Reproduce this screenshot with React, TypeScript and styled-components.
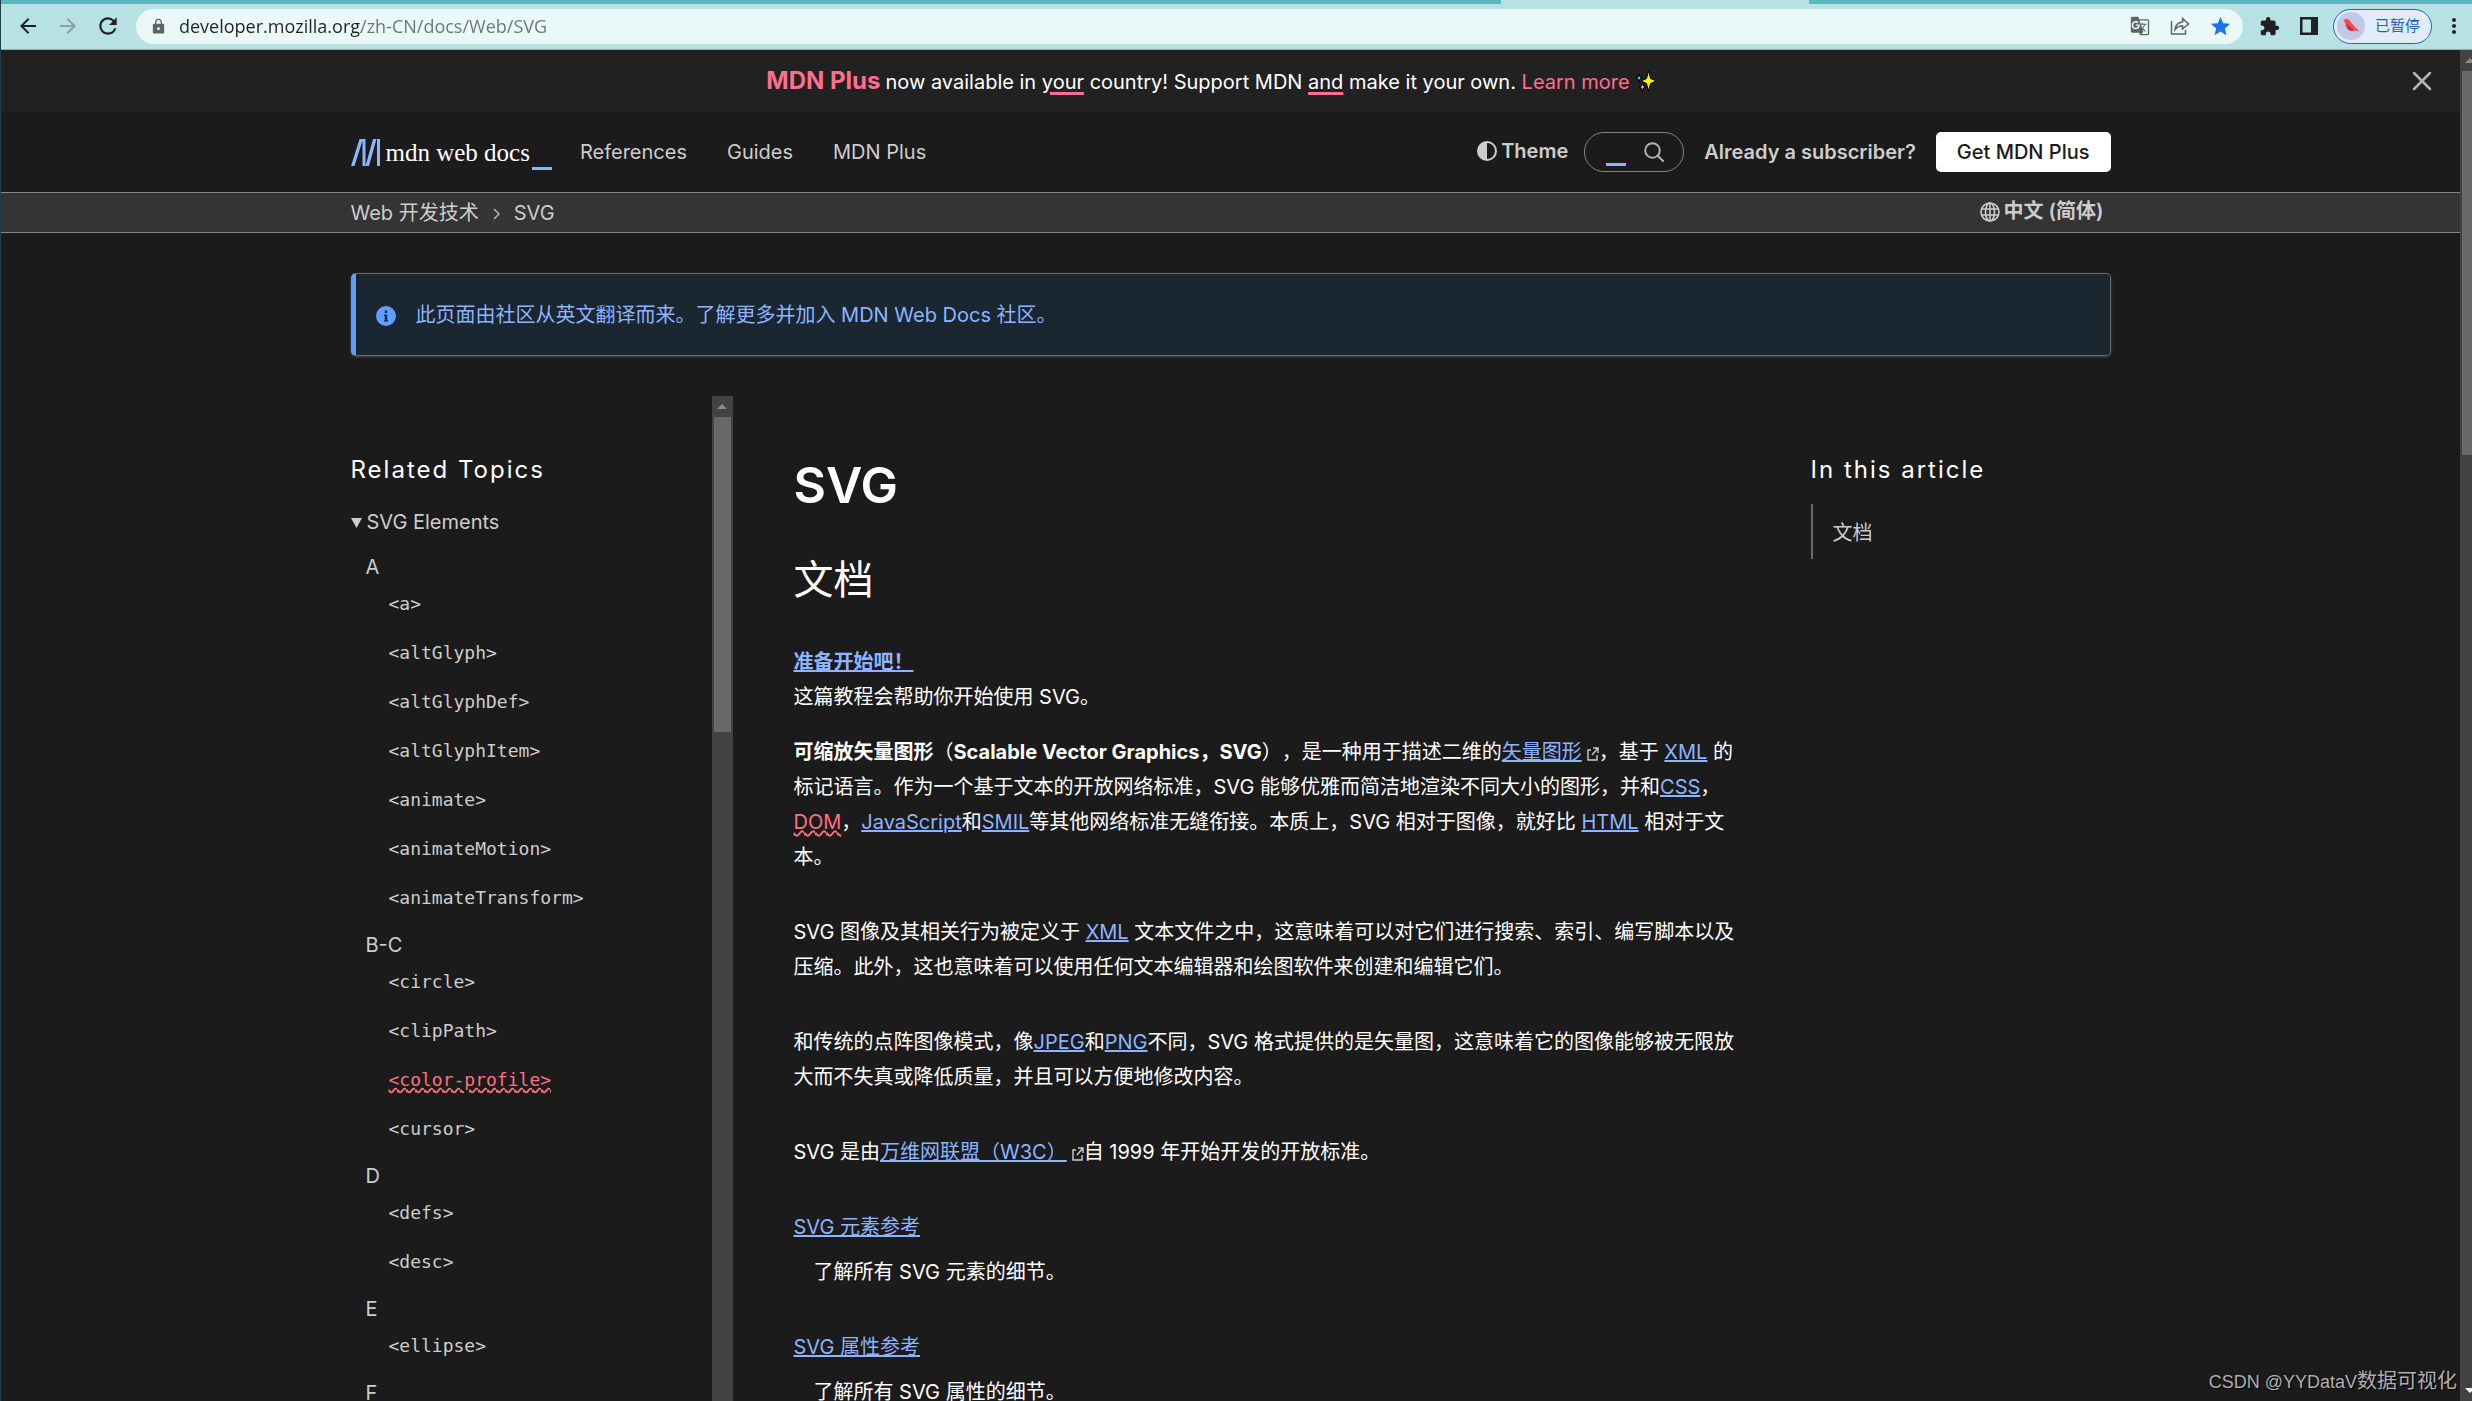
import React from "react";
import styled, { createGlobalStyle, css } from "styled-components";
import { MdArrowBack, MdArrowForward, MdRefresh, MdLock, MdStar, MdExtension, MdGTranslate, MdMoreVert } from "react-icons/md";

const sans = `Inter, "Noto Sans CJK SC", sans-serif`;
const mono = `"DejaVu Sans Mono", monospace`;

const c = {
  page: "#1b1b1b",
  raised: "#212121",
  bar: "#343434",
  line: "#858585",
  text: "#ffffff",
  soft: "#cdcdcd",
  link: "#8cb4ff",
  pink: "#ff6d91",
  red: "#ff707f",
  track: "#424242",
  thumb: "#686868",
};

const GlobalStyle = createGlobalStyle`
  *, *::before, *::after { box-sizing: border-box; }
  body { margin: 0; background: ${c.page}; }
  h1, h2, p, ul, dl, dd { margin: 0; padding: 0; }
  ul { list-style: none; }
  button, input { font: inherit; color: inherit; background: none; border: 0; padding: 0; margin: 0; outline: 0; }
  a { color: inherit; text-decoration: none; }
  svg { display: block; flex: none; }
`;

const Window = styled.div`
  display: flex;
  flex-direction: column;
  height: 100vh;
  overflow: hidden;
  position: relative;
  border-left: 1px solid #1f3f4a;
  font-family: ${sans};
  font-size: 20px;
  line-height: 35px;
  color: ${c.text};
  background: ${c.page};
  text-spacing-trim: space-all;
`;

/* Browser chrome */
const TabStrip = styled.div`
  flex: none;
  display: flex;
  justify-content: center;
  height: 4px;
  background: #5ab8c1;
`;
const ActiveTab = styled.div`
  width: 308px;
  margin-left: 836px;
  background: #b8e1e4;
`;
const Toolbar = styled.div`
  flex: none;
  display: flex;
  align-items: center;
  height: 46px;
  padding: 5px 6px 6px 15px;
  background: #b8e1e4;
  border-bottom: 1px solid #93adaf;
`;
const ChromeButton = styled.button<{ $dim?: boolean }>`
  display: grid;
  place-items: center;
  width: 40px;
  height: 34px;
  margin-left: -8px;
  margin-right: 8px;
  color: ${(p) => (p.$dim ? "#84a1a4" : "#202124")};
`;
const Omnibox = styled.div`
  flex: 1;
  display: flex;
  align-items: center;
  height: 35px;
  padding: 0 11px 0 14px;
  gap: 12px;
  border-radius: 18px;
  background: #ebf8f8;
  color: #5f6368;
`;
const Address = styled.input`
  flex: 1;
  height: 30px;
  font-family: "Open Sans", sans-serif;
  font-size: 18px;
  color: #202124;
  background: linear-gradient(90deg, #202124 182px, #6b7377 182px);
  background-clip: text;
  -webkit-background-clip: text;
  -webkit-text-fill-color: transparent;
`;
const BoxActions = styled.div`
  display: flex;
  gap: 16px;
`;
const SmallButton = styled.button<{ $blue?: boolean }>`
  display: grid;
  place-items: center;
  width: 24px;
  height: 24px;
  color: ${(p) => (p.$blue ? "#1a73e8" : "inherit")};
`;
const ChromeActions = styled.div`
  display: flex;
  align-items: center;
  gap: 16px;
  padding-left: 14px;
  color: #202124;
`;
const Profile = styled.button`
  display: flex;
  align-items: center;
  gap: 10px;
  width: 99px;
  height: 35px;
  margin: 0 -6px 0 -4px;
  padding-left: 3px;
  border: 1px solid #2064cf;
  border-radius: 18px;
  background: #e0ecf6;
  color: #1d5fc7;
  font-size: 15px;
  line-height: 30px;
`;

/* Page frame */
const Viewport = styled.div`
  flex: 1;
  min-height: 0;
  display: flex;
`;
const Page = styled.div`
  flex: 1;
  min-width: 0;
  overflow: hidden;
`;
const Container = styled.div`
  width: 1760px;
  max-width: 100%;
  margin: 0 auto;
`;
const PageTrack = styled.div`
  flex: none;
  display: flex;
  flex-direction: column;
  width: 12px;
  overflow: hidden;
  background: ${c.track};
  padding: 0 0 0 2px;
`;
const SideTrack = styled(PageTrack)`
  width: 21px;
  margin-right: 1px;
  padding: 0 2px;
`;
const Arrow = styled.div<{ $down?: boolean; $clip?: boolean }>`
  flex: none;
  display: flex;
  align-items: center;
  justify-content: ${(p) => (p.$clip ? "flex-start" : "center")};
  padding-left: ${(p) => (p.$clip ? "3px" : "0")};
  height: 21px;
  margin-top: ${(p) => (p.$down ? "auto" : "0")};
  &::before {
    content: "";
    border: 5px solid transparent;
    ${(p) =>
      p.$down
        ? css`border-top-color: #ffffff; border-bottom-width: 0;`
        : css`border-bottom-color: #8b8b8b; border-top-width: 0;`}
  }
`;
const Thumb = styled.div<{ $share: number }>`
  flex: 0 0 ${(p) => p.$share}px;
  background: ${c.thumb};
`;

const Banner = styled.div`
  display: flex;
  align-items: center;
  height: 62px;
  padding: 0 26px 0 12px;
  background: ${c.raised};
`;
const BannerText = styled.p`
  flex: 1;
  display: flex;
  justify-content: center;
  align-items: baseline;
  gap: 5px;
  u {
    text-decoration: underline ${c.pink} 3px;
    text-underline-offset: 3px;
  }
  strong { font-size: 24px; font-weight: 700; color: ${c.pink}; }
  a { color: ${c.pink}; }
  svg { align-self: center; }
`;
const CloseButton = styled.button`
  display: grid;
  place-items: center;
  width: 24px;
  height: 24px;
  color: #b3b3b3;
`;

const Header = styled(Container).attrs({ as: "header" })`
  display: flex;
  align-items: center;
  height: 80px;
`;
const Logo = styled.a`
  display: flex;
  align-items: center;
  font-family: "Liberation Serif", serif;
  font-size: 25px;
  gap: 6px;
  margin-right: 28px;
`;
const Cursor = styled.span`
  align-self: flex-end;
  width: 20px;
  height: 3px;
  margin-left: -4px;
  background: ${c.link};
`;
const Nav = styled.nav`
  display: flex;
  gap: 40px;
  margin-right: auto;
  color: ${c.soft};
`;
const Tools = styled.div`
  display: flex;
  align-items: center;
  gap: 20px;
  font-weight: 600;
  color: ${c.soft};
`;
const IconTextButton = styled.button`
  display: flex;
  align-items: center;
  gap: 4px;
  padding-bottom: 2px;
  font-weight: 600;
  color: ${c.soft};
`;
const SearchForm = styled.form`
  display: flex;
  align-items: center;
  gap: 18px;
  width: 100px;
  height: 40px;
  margin-left: -4px;
  padding: 0 18px 0 21px;
  border: 1px solid #858585;
  border-radius: 20px;
`;
const SearchInput = styled.input`
  width: 20px;
  height: 28px;
  border-bottom: 3px solid ${c.link};
`;
const PlusButton = styled.button`
  height: 40px;
  padding: 0 21px;
  border-radius: 5px;
  background: #ffffff;
  color: #1b1b1b;
  font-weight: 500;
`;

const CrumbBar = styled.div`
  background: ${c.bar};
  border: solid ${c.line};
  border-width: 1px 0;
`;
const CrumbRow = styled(Container)`
  display: flex;
  justify-content: space-between;
  height: 39px;
  padding-right: 7px;
`;
const Crumbs = styled.nav`
  display: flex;
  align-items: center;
  gap: 12px;
  padding-top: 2px;
  color: ${c.soft};
`;

const Notice = styled.a`
  display: flex;
  align-items: center;
  gap: 20px;
  margin: 40px 0;
  padding: 24px 20px 22px;
  border: 1px solid #696969;
  border-left: 5px solid #5e9eff;
  border-radius: 5px;
  background: #1a2630;
  box-shadow: 0 1px 3px rgba(255, 255, 255, 0.2);
  color: ${c.link};
`;

const Columns = styled.div`
  display: grid;
  grid-template-columns: 383px minmax(0, 1fr) 300px;
  column-gap: 60px;
`;
const Sidebar = styled.aside`
  display: flex;
  height: calc(100vh - 396px);
  overflow: hidden;
`;
const SidebarBody = styled.div`
  flex: 1;
  padding-top: 56px;
  color: ${c.soft};
`;
const SideHeading = styled.h2`
  margin-bottom: 17px;
  font-size: 24px;
  font-weight: 400;
  letter-spacing: 2px;
  color: ${c.text};
`;
const Details = styled.details`
  padding-top: 1px;
  summary {
    display: flex;
    align-items: center;
    gap: 5px;
    margin-bottom: 10px;
    list-style: none;
  }
`;
const Group = styled.li`
  padding-left: 15px;
`;
const Item = styled.li<{ $deprecated?: boolean }>`
  padding: 0 0 12px 23px;
  line-height: 37px;
  font-family: ${mono};
  font-size: 18px;
  a {
    color: ${(p) => (p.$deprecated ? c.red : "inherit")};
    text-decoration: ${(p) => (p.$deprecated ? "underline wavy" : "none")};
  }
`;

const Article = styled.main`
  padding-top: 59px;
  h1 { margin-bottom: 35px; font-size: 50px; line-height: 60px; font-weight: 600; }
  h2 { margin-bottom: 35px; font-size: 40px; line-height: 60px; font-weight: 400; }
  p { margin-bottom: 40px; }
  dt { margin-bottom: 10px; }
  dd { margin-bottom: 40px; padding-left: 20px; }
`;
const Lead = styled.div`
  margin-bottom: 20px;
`;
const Link = styled.a<{ $missing?: boolean; $bold?: boolean }>`
  color: ${(p) => (p.$missing ? c.red : c.link)};
  font-weight: ${(p) => (p.$bold ? 700 : 400)};
  text-decoration: underline ${(p) => (p.$missing ? "wavy" : "solid")};
`;
const Outward = styled.svg`
  display: inline-block;
  margin-left: 5px;
  vertical-align: -2px;
`;

const Toc = styled.aside`
  padding-top: 56px;
`;
const TocItem = styled.li`
  padding: 12px 20px 8px;
  border-left: 2px solid #696969;
  color: ${c.soft};
`;

const Watermark = styled.div`
  position: absolute;
  right: 15px;
  bottom: 1px;
  font-family: "Liberation Sans", "Noto Sans CJK SC", sans-serif;
  font-size: 18px;
  color: #b0b0b0;
  text-shadow: 1px 1px 1px #000000;
  span { font-size: 20px; }
`;

const groups: { title: string; items: string[] }[] = [
  { title: "A", items: ["a", "altGlyph", "altGlyphDef", "altGlyphItem", "animate", "animateMotion", "animateTransform"] },
  { title: "B-C", items: ["circle", "clipPath", "color-profile", "cursor"] },
  { title: "D", items: ["defs", "desc"] },
  { title: "E", items: ["ellipse"] },
  { title: "F", items: [] },
];

const ExternalIcon = () => (
  <Outward width="12" height="14" viewBox="0 0 12 14" fill="none" stroke="#cdcdcd" strokeWidth="1.4">
    <path d="M4 3H1v10h9V8M6 1h5v5M11 1L5 8" />
  </Outward>
);

const Sparkles = () => (
  <svg width="22" height="22" viewBox="0 0 22 22" stroke="#000" strokeWidth="1">
    <path d="M13.500 1L15.500 8.500L21.500 11L15.500 13.500L13.500 21L11.500 13.500L6 11L11.500 8.500Z" fill="#fff100" />
    <path d="M4 3.500L5 7L8 8L5 9L4 12.500L3 9L.5 8L3 7Z" fill="#50c8f4" />
    <path d="M7.500 13L8.500 16L10.500 17L8.500 18L7.500 21L6.500 18L4 17L6.500 16Z" fill="#f4a6d8" />
  </svg>
);

export default function App() {
  return (
    <Window lang="zh-CN">
      <GlobalStyle />
      <TabStrip><ActiveTab /></TabStrip>
      <Toolbar>
        <ChromeButton aria-label="Back"><MdArrowBack size={24} /></ChromeButton>
        <ChromeButton aria-label="Forward" $dim><MdArrowForward size={24} /></ChromeButton>
        <ChromeButton aria-label="Reload"><MdRefresh size={26} /></ChromeButton>
        <Omnibox>
          <MdLock size={17} />
          <Address aria-label="Address" defaultValue="developer.mozilla.org/zh-CN/docs/Web/SVG" />
          <BoxActions>
            <SmallButton aria-label="Translate"><MdGTranslate size={20} /></SmallButton>
            <SmallButton aria-label="Share">
              <svg width="20" height="20" viewBox="0 0 20 20" fill="none" stroke="currentColor" strokeWidth="1.500">
                <path d="M1.500 5v13h14v-4" />
                <path d="M5 13.500C5.500 9 8 6.500 12.500 6V2.500L18.500 8L12.500 13V9.800C9 9.800 7 11 5 13.500Z" />
              </svg>
            </SmallButton>
            <SmallButton aria-label="Bookmark" $blue><MdStar size={23} /></SmallButton>
          </BoxActions>
        </Omnibox>
        <ChromeActions>
          <SmallButton aria-label="Extensions"><MdExtension size={21} /></SmallButton>
          <SmallButton aria-label="Side panel">
            <svg width="18" height="18" viewBox="0 0 18 18"><path fillRule="evenodd" fill="currentColor" d="M0 0h18v18H0zM2.500 2.500v13h8.500v-13z" /></svg>
          </SmallButton>
          <Profile>
            <svg width="28" height="28" viewBox="0 0 28 28">
              <circle cx="14" cy="14" r="14" fill="#c3c8e8" />
              <path d="M6.500 8.500C8 6.500 11 6.500 12.500 8.500L17 14L22.500 19.500L17.500 18.500C13 20.500 8.500 17 8.500 11.500Z" fill="#f5484b" />
              <path d="M10 12l7 6-3 1c-3-1-4-4-4-7Z" fill="#c92d45" />
            </svg>
            已暂停
          </Profile>
          <SmallButton aria-label="Menu"><MdMoreVert size={24} /></SmallButton>
        </ChromeActions>
      </Toolbar>

      <Viewport>
        <Page>
          <Banner>
            <BannerText>
              <strong>MDN Plus</strong>
              <span>now available in <u>your</u> country! Support MDN <u>and</u> make it your own. <a href="#plus">Learn more</a></span>
              <Sparkles />
            </BannerText>
            <CloseButton aria-label="Close">
              <svg width="20" height="20" viewBox="0 0 20 20" stroke="currentColor" strokeWidth="2.500" strokeLinecap="round"><path d="M2 2l16 16M18 2L2 18" /></svg>
            </CloseButton>
          </Banner>

          <Header>
            <Logo href="#home">
              <svg width="29" height="27" viewBox="0 0 29 27" fill={c.link}>
                <path d="M8.500 0H12L3.500 27H0zM11.500 0h3v27h-3zM22 0h3.500L18 27h-3.500zM26 0h3v27h-3z" />
              </svg>
              mdn web docs
              <Cursor />
            </Logo>
            <Nav>
              <a href="#references">References</a>
              <a href="#guides">Guides</a>
              <a href="#plus">MDN Plus</a>
            </Nav>
            <Tools>
              <IconTextButton>
                <svg width="20" height="20" viewBox="0 0 20 20"><circle cx="10" cy="10" r="9" fill="none" stroke="currentColor" strokeWidth="2" /><path d="M10 1a9 9 0 0 0 0 18z" fill="currentColor" /></svg>
                Theme
              </IconTextButton>
              <SearchForm>
                <SearchInput type="text" aria-label="Search" />
                <button type="button" aria-label="Search">
                  <svg width="20" height="20" viewBox="0 0 20 20" fill="none" stroke="#b3b3b3" strokeWidth="2" strokeLinecap="round"><circle cx="8.500" cy="8.500" r="7.300" /><path d="M13.800 13.800L19 19" /></svg>
                </button>
              </SearchForm>
              <a href="#login">Already a subscriber?</a>
              <PlusButton>Get MDN Plus</PlusButton>
            </Tools>
          </Header>

          <CrumbBar>
            <CrumbRow>
              <Crumbs>
                <a href="#web">Web 开发技术</a>
                <svg width="11" height="16" viewBox="0 0 11 16" fill="none" stroke="#b3b3b3" strokeWidth="1.500"><path d="M3 3l5 5-5 5" /></svg>
                <a href="#svg">SVG</a>
              </Crumbs>
              <IconTextButton>
                <svg width="20" height="20" viewBox="0 0 20 20" fill="none" stroke="currentColor" strokeWidth="1.600">
                  <circle cx="10" cy="10" r="9" /><ellipse cx="10" cy="10" rx="4.500" ry="9" /><path d="M10 1v18M1.500 7h17M1.500 13h17" />
                </svg>
                中文 (简体)
              </IconTextButton>
            </CrumbRow>
          </CrumbBar>

          <Container>
            <Notice href="#community">
              <svg width="20" height="20" viewBox="0 0 20 20"><circle cx="10" cy="10" r="10" fill="#5e9eff" /><path d="M8.800 4.500h2.400v2.400H8.800zM8 8.500h3.200V14H12v1.500H8V14h.8v-4H8z" fill="#1a2630" /></svg>
              <span>此页面由社区从英文翻译而来。了解更多并加入 MDN Web Docs 社区。</span>
            </Notice>

            <Columns>
              <Sidebar>
                <SidebarBody>
                  <SideHeading>Related Topics</SideHeading>
                  <Details open>
                    <summary>
                      <svg width="11" height="10" viewBox="0 0 11 10"><path d="M0 0h11L5.500 10z" fill={c.soft} /></svg>
                      SVG Elements
                    </summary>
                    <ul>
                      {groups.map((g) => (
                        <Group key={g.title}>
                          {g.title}
                          <ul>
                            {g.items.map((i) => (
                              <Item key={i} $deprecated={i === "color-profile"}><a href={`#${i}`}>{`<${i}>`}</a></Item>
                            ))}
                          </ul>
                        </Group>
                      ))}
                    </ul>
                  </Details>
                </SidebarBody>
                <SideTrack><Arrow /><Thumb $share={315} /></SideTrack>
              </Sidebar>

              <Article>
                <h1>SVG</h1>
                <h2>文档</h2>
                <Lead>
                  <Link href="#start" $bold>准备开始吧！</Link><br />
                  这篇教程会帮助你开始使用 SVG。
                </Lead>
                <p>
                  <strong>可缩放矢量图形</strong>（<strong>Scalable Vector Graphics，SVG</strong>），是一种用于描述二维的<Link href="#vector">矢量图形</Link><ExternalIcon />，基于 <Link href="#xml">XML</Link> 的标记语言。作为一个基于文本的开放网络标准，SVG 能够优雅而简洁地渲染不同大小的图形，并和<Link href="#css">CSS</Link>，<Link href="#dom" $missing>DOM</Link>，<Link href="#js">JavaScript</Link>和<Link href="#smil">SMIL</Link>等其他网络标准无缝衔接。本质上，SVG 相对于图像，就好比 <Link href="#html">HTML</Link> 相对于文本。
                </p>
                <p>
                  SVG 图像及其相关行为被定义于 <Link href="#xml">XML</Link> 文本文件之中，这意味着可以对它们进行搜索、索引、编写脚本以及压缩。此外，这也意味着可以使用任何文本编辑器和绘图软件来创建和编辑它们。
                </p>
                <p>
                  和传统的点阵图像模式，像<Link href="#jpeg">JPEG</Link>和<Link href="#png">PNG</Link>不同，SVG 格式提供的是矢量图，这意味着它的图像能够被无限放大而不失真或降低质量，并且可以方便地修改内容。
                </p>
                <p>
                  SVG 是由<Link href="#w3c">万维网联盟（W3C）</Link><ExternalIcon />自 1999 年开始开发的开放标准。
                </p>
                <dl>
                  <dt><Link href="#elements">SVG 元素参考</Link></dt>
                  <dd>了解所有 SVG 元素的细节。</dd>
                  <dt><Link href="#attributes">SVG 属性参考</Link></dt>
                  <dd>了解所有 SVG 属性的细节。</dd>
                </dl>
              </Article>

              <Toc>
                <SideHeading>In this article</SideHeading>
                <ul><TocItem><a href="#docs">文档</a></TocItem></ul>
              </Toc>
            </Columns>
          </Container>
        </Page>
        <PageTrack><Arrow $clip /><Thumb $share={384} /><Arrow $down $clip /></PageTrack>
      </Viewport>
      <Watermark>CSDN @YYDataV<span>数据可视化</span></Watermark>
    </Window>
  );
}
